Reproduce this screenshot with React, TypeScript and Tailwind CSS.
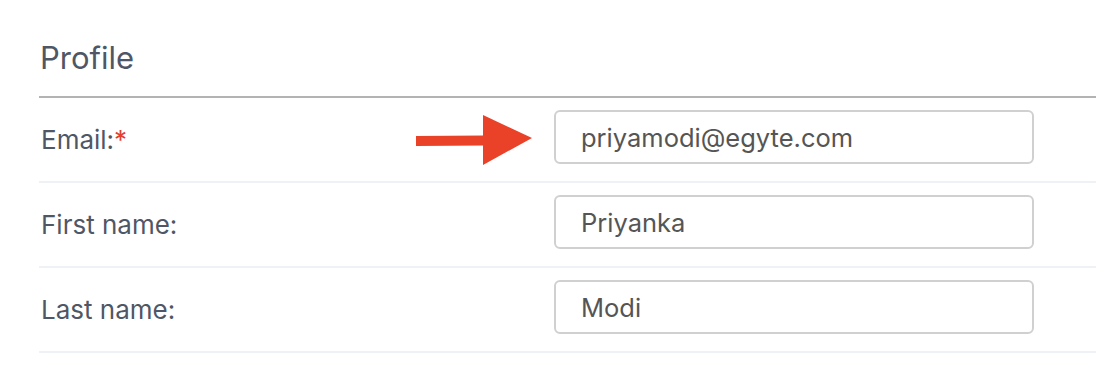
import React from "react";

const fields = [
  { label: "Email:", value: "priyamodi@egyte.com", required: true },
  { label: "First name:", value: "Priyanka" },
  { label: "Last name:", value: "Modi" },
];

function Arrow() {
  return (
    <svg width="116" height="50" viewBox="0 0 116 50" className="shrink-0">
      <polygon points="0,21 68,20.5 68,30.5 0,31" fill="#ea4129" />
      <polygon points="67,0 116,23 67,50" fill="#ea4129" />
    </svg>
  );
}

export default function App() {
  return (
    <div
      className="min-h-screen bg-white pl-[39px]"
      style={{ fontFamily: "Inter, 'Liberation Sans', sans-serif" }}
    >
      {/* Header */}
      <div className="h-[98px] border-b-2 border-[#b3b3b3] pt-[38px] pl-[1px]">
        <h1 className="text-[31px] leading-[40px] text-[#4f5766]">Profile</h1>
      </div>

      {/* Rows */}
      {fields.map((f) => (
        <div
          key={f.label}
          className="flex h-[85px] items-center border-b-2 border-[#eef1f5]"
        >
          <div className="flex w-[515px] items-center pl-[2px] pr-[22px]">
            <span className="text-[26px] leading-none text-[#4f5766]">
              {f.label}
              {f.required && <span className="text-[#e53e2e]">*</span>}
            </span>
            {f.required && (
              <div className="ml-auto">
                <Arrow />
              </div>
            )}
          </div>
          <input
            readOnly
            defaultValue={f.value}
            className="mb-[5px] h-[54px] w-[480px] rounded-[6px] border-2 border-[#d0d0d0] px-[25px] text-[25.5px] text-[#555555] outline-none"
          />
        </div>
      ))}
    </div>
  );
}
